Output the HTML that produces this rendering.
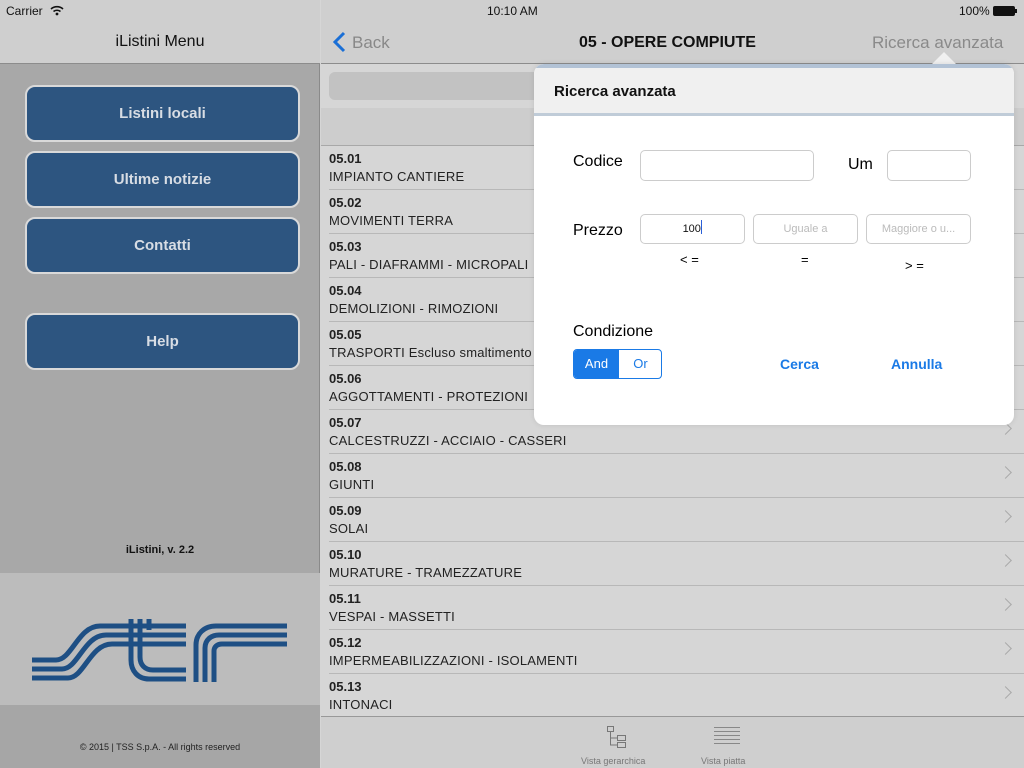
<!DOCTYPE html>
<html><head><meta charset="utf-8"><style>
*{margin:0;padding:0;box-sizing:border-box}
body{width:1024px;height:768px;overflow:hidden;font-family:"Liberation Sans",sans-serif;position:relative;background:#d6d6d6}
.abs{position:absolute}
#left{left:0;top:0;width:320px;height:768px;background:#a8a8a8;border-right:1px solid #8a8a8a}
.btn{position:absolute;left:25px;width:275px;height:57px;background:#2d5580;border:2px solid #d9d9d9;border-radius:10px;color:#d8dde4;font-weight:bold;font-size:15px;text-align:center;line-height:53px}
.row{position:absolute;left:320px;width:704px;height:44px}
.row .c{position:absolute;left:9px;top:5px;font-size:13px;font-weight:bold;color:#222}
.row .n{position:absolute;left:9px;top:23px;font-size:13px;color:#222;letter-spacing:0.2px}
.row .l{position:absolute;left:9px;right:0;bottom:0;border-bottom:1px solid #b8b8b8}
.row .ch{position:absolute;right:14px;top:14px;width:9px;height:9px;border-right:1.5px solid #aaa;border-top:1.5px solid #aaa;transform:rotate(45deg)}
.inp{position:absolute;border:1px solid #ccc;border-radius:5px;background:#fff;font-size:11px;color:#bbb;text-align:center;line-height:29px}
.lab{position:absolute;font-size:16px;color:#000}
</style></head><body>
<div id="left" class="abs">
  <div class="abs" style="left:0;top:0;width:320px;height:64px;background:#cfcfcf;border-bottom:1px solid #8c8c8c"></div>
  <div class="abs" style="left:6px;top:4px;font-size:12px;color:#111">Carrier</div>
  <svg class="abs" style="left:50px;top:5px" width="14" height="11"><g fill="none" stroke="#111" stroke-width="1.6"><path d="M1 4 A9 9 0 0 1 13 4"/><path d="M3.5 6.5 A5.5 5.5 0 0 1 10.5 6.5"/></g><circle cx="7" cy="9" r="1.4" fill="#111"/></svg>
  <div class="abs" style="left:0;width:320px;top:33px;text-align:center;font-size:16px;color:#111">iListini Menu</div>
  <div class="btn" style="top:85px">Listini locali</div>
  <div class="btn" style="top:151px">Ultime notizie</div>
  <div class="btn" style="top:217px">Contatti</div>
  <div class="btn" style="top:313px">Help</div>
  <div class="abs" style="left:0;width:320px;top:544px;text-align:center;font-size:11px;font-weight:bold;color:#111">iListini, v. 2.2</div>
  <div class="abs" style="left:0;top:573px;width:320px;height:132px;background:#bcbcbc"></div>
  <svg class="abs" style="left:0;top:573px" width="320" height="132" viewBox="0 573 320 132">
    <g fill="none" stroke="#1e4f84" stroke-width="5">
      <path d="M32 660 H56 C72 660 78 626 100 626 H186"/>
      <path d="M32 669 H62 C78 669 84 635 106 635 H186"/>
      <path d="M32 678 H68 C84 678 90 644 112 644 H186"/>
      <path d="M131 619 V660 C131 671 138 679 149 679 H186"/>
      <path d="M140 619 V657 C140 665 145 670 153 670 H186"/>
      <path d="M149 619 V630"/>
      <path d="M196 682 V645 C196 634 204 626 216 626 H287"/>
      <path d="M205 682 V648 C205 640 211 635 219 635 H287"/>
      <path d="M214 682 V651 C214 647 217 644 222 644 H287"/>
    </g>
  </svg>
  <div class="abs" style="left:0;top:705px;width:320px;height:63px;background:#a6a6a6"></div>
  <div class="abs" style="left:0;width:320px;top:742px;text-align:center;font-size:9px;color:#222">© 2015 | TSS S.p.A. - All rights reserved</div>
</div>
<div class="abs" style="left:321px;top:0;width:703px;height:64px;background:#cfcfcf;border-bottom:1px solid #8c8c8c"></div>
<div class="abs" style="left:487px;top:4px;font-size:12px;color:#111">10:10 AM</div>
<div class="abs" style="left:959px;top:4px;font-size:12px;color:#111">100%</div>
<div class="abs" style="left:993px;top:6px;width:22px;height:10px;border:1px solid #111;border-radius:2px;background:#111"></div>
<div class="abs" style="left:1015px;top:9px;width:2px;height:4px;background:#111"></div>
<svg class="abs" style="left:332px;top:31px" width="14" height="22"><path d="M12 2 L3 11 L12 20" fill="none" stroke="#1a6fd6" stroke-width="3"/></svg>
<div class="abs" style="left:352px;top:33px;font-size:17px;color:#888">Back</div>
<div class="abs" style="left:579px;top:34px;font-size:16px;font-weight:bold;color:#111">05 - OPERE COMPIUTE</div>
<div class="abs" style="left:872px;top:33px;font-size:17px;color:#8a8a8a">Ricerca avanzata</div>
<div class="abs" style="left:329px;top:72px;width:300px;height:28px;background:#c2c2c2;border-radius:6px"></div>
<div class="abs" style="left:321px;top:108px;width:703px;height:38px;background:#cdcdcd;border-bottom:1px solid #a8a8a8"></div>

<div class="row" style="top:146px"><div class="c">05.01</div><div class="n">IMPIANTO CANTIERE</div><div class="l"></div><div class="ch"></div></div>
<div class="row" style="top:190px"><div class="c">05.02</div><div class="n">MOVIMENTI TERRA</div><div class="l"></div><div class="ch"></div></div>
<div class="row" style="top:234px"><div class="c">05.03</div><div class="n">PALI - DIAFRAMMI - MICROPALI</div><div class="l"></div><div class="ch"></div></div>
<div class="row" style="top:278px"><div class="c">05.04</div><div class="n">DEMOLIZIONI - RIMOZIONI</div><div class="l"></div><div class="ch"></div></div>
<div class="row" style="top:322px"><div class="c">05.05</div><div class="n">TRASPORTI Escluso smaltimento</div><div class="l"></div><div class="ch"></div></div>
<div class="row" style="top:366px"><div class="c">05.06</div><div class="n">AGGOTTAMENTI - PROTEZIONI</div><div class="l"></div><div class="ch"></div></div>
<div class="row" style="top:410px"><div class="c">05.07</div><div class="n">CALCESTRUZZI - ACCIAIO - CASSERI</div><div class="l"></div><div class="ch"></div></div>
<div class="row" style="top:454px"><div class="c">05.08</div><div class="n">GIUNTI</div><div class="l"></div><div class="ch"></div></div>
<div class="row" style="top:498px"><div class="c">05.09</div><div class="n">SOLAI</div><div class="l"></div><div class="ch"></div></div>
<div class="row" style="top:542px"><div class="c">05.10</div><div class="n">MURATURE - TRAMEZZATURE</div><div class="l"></div><div class="ch"></div></div>
<div class="row" style="top:586px"><div class="c">05.11</div><div class="n">VESPAI - MASSETTI</div><div class="l"></div><div class="ch"></div></div>
<div class="row" style="top:630px"><div class="c">05.12</div><div class="n">IMPERMEABILIZZAZIONI - ISOLAMENTI</div><div class="l"></div><div class="ch"></div></div>
<div class="row" style="top:674px"><div class="c">05.13</div><div class="n">INTONACI</div><div class="l"></div><div class="ch"></div></div>

<div class="abs" style="left:321px;top:716px;width:703px;height:52px;background:#cfcfcf;border-top:1px solid #999"></div>
<svg class="abs" style="left:606px;top:725px" width="22" height="24"><g fill="none" stroke="#777" stroke-width="1"><rect x="1.5" y="1.5" width="6" height="5"/><rect x="11.5" y="10.5" width="8" height="5"/><rect x="11.5" y="17.5" width="8" height="5"/><path d="M4.5 7 V20 H11 M4.5 13 H11"/></g></svg>
<div class="abs" style="left:581px;top:756px;font-size:9px;color:#777">Vista gerarchica</div>
<svg class="abs" style="left:714px;top:726px" width="26" height="20"><g stroke="#888" stroke-width="1"><path d="M0 1.5H26M0 5.5H26M0 9.5H26M0 13.5H26M0 17.5H26"/></g></svg>
<div class="abs" style="left:701px;top:756px;font-size:9px;color:#777">Vista piatta</div>

<div class="abs" style="left:932px;top:52px;width:0;height:0;border-left:12px solid transparent;border-right:12px solid transparent;border-bottom:12px solid #f0f0f0"></div>
<div class="abs" style="left:534px;top:64px;width:480px;height:361px;background:#fff;border-radius:10px;overflow:hidden;box-shadow:0 0 6px rgba(0,0,0,.1)">
  <div class="abs" style="left:0;top:0;width:480px;height:52px;background:#f0f0f0;border-top:4px solid #b2c2d5;border-bottom:3px solid #c0ccd8"></div>
  <div class="abs" style="left:20px;top:19px;font-size:15px;font-weight:bold;color:#111">Ricerca avanzata</div>
</div>
<div class="lab" style="left:573px;top:153px">Codice</div>
<div class="inp" style="left:640px;top:150px;width:174px;height:31px"></div>
<div class="lab" style="left:848px;top:156px">Um</div>
<div class="inp" style="left:887px;top:150px;width:84px;height:31px"></div>
<div class="lab" style="left:573px;top:222px">Prezzo</div>
<div class="inp" style="left:640px;top:214px;width:105px;height:30px;color:#111">100<span style="display:inline-block;width:1.5px;height:14px;background:#2a5fd8;vertical-align:-2px"></span></div>
<div class="inp" style="left:753px;top:214px;width:105px;height:30px">Uguale a</div>
<div class="inp" style="left:866px;top:214px;width:105px;height:30px">Maggiore o u...</div>
<div class="abs" style="left:680px;top:252px;font-size:13px">&lt; =</div>
<div class="abs" style="left:801px;top:252px;font-size:13px">=</div>
<div class="abs" style="left:905px;top:258px;font-size:13px">&gt; =</div>
<div class="lab" style="left:573px;top:323px">Condizione</div>
<div class="abs" style="left:573px;top:349px;width:89px;height:30px;border:1px solid #1a7ae6;border-radius:4px;overflow:hidden;font-size:13px;line-height:28px">
  <div class="abs" style="left:0;top:0;width:45px;height:28px;background:#1a7ae6;color:#fff;text-align:center">And</div>
  <div class="abs" style="left:45px;top:0;width:43px;height:28px;color:#1a7ae6;text-align:center">Or</div>
</div>
<div class="abs" style="left:780px;top:356px;font-size:14px;font-weight:bold;color:#1a7ae6">Cerca</div>
<div class="abs" style="left:891px;top:356px;font-size:14px;font-weight:bold;color:#1a7ae6">Annulla</div>
</body></html>
